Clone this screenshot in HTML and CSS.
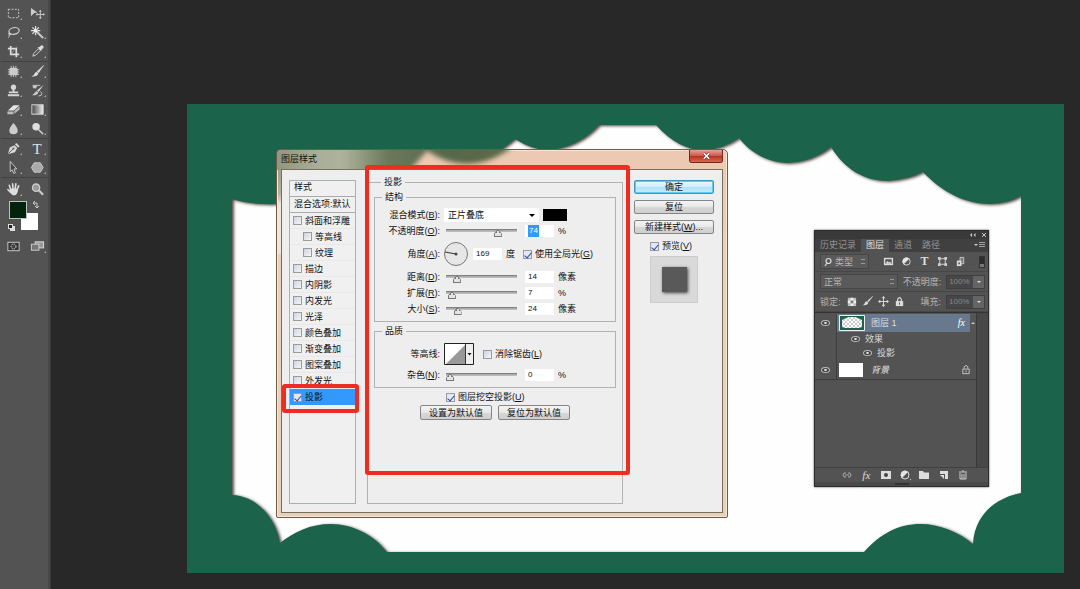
FILE: index.html
```
<!DOCTYPE html>
<html lang="zh-CN">
<head>
<meta charset="utf-8">
<meta name="viewport" content="width=device-width, initial-scale=1">
<title>图层样式</title>
<link rel="stylesheet" href="styles.css">
</head>
<body>
<div class="app">
  <nav class="tools" aria-label="工具">
    <div class="tool-group">
      <button class="tool more" aria-label="选框"><svg viewBox="0 0 16 16"><rect x="2.500" y="3.500" width="11" height="9" fill="none" stroke="#d2d2d2" stroke-dasharray="2 1.500"/></svg></button>
      <button class="tool" aria-label="移动"><svg viewBox="0 0 16 16"><path d="M1 2l7 5-3.500.500L1 11z" fill="#ccc"/><path d="M11 5v8M7 9h8" stroke="#ccc"/><path d="M11 4l-1.500 2h3zM11 14l-1.500-2h3zM16 9l-2-1.500v3zM6 9l2-1.500v3z" fill="#ccc"/></svg></button>
      <button class="tool more" aria-label="套索"><svg viewBox="0 0 16 16"><ellipse cx="8.500" cy="6.500" rx="5.500" ry="3.500" fill="none" stroke="#d2d2d2" stroke-width="1.300" transform="rotate(-12 8 6)"/><path d="M4 8c-2 1-1 3 .5 2.500S5 8.500 4 9c-1 2 0 3-1.500 4.500" fill="none" stroke="#d2d2d2"/></svg></button>
      <button class="tool more" aria-label="魔棒"><svg viewBox="0 0 16 16"><path d="M7 7l7 7" stroke="#ccc" stroke-width="2.200"/><path d="M6 1v4M6 8v3M1 6h4M8 6h3M2.500 2.500l2.500 2.500M9.500 2.500L7.500 4.500M2.500 9.500L4.500 7.500" stroke="#ddd" stroke-width="1.300"/><circle cx="6" cy="6" r="2" fill="#eee"/></svg></button>
      <button class="tool more" aria-label="裁剪"><svg viewBox="0 0 16 16"><path d="M5 2v9h9M2 5h9v9" fill="none" stroke="#ddd" stroke-width="1.800"/><path d="M5 11l7-8" stroke="#bbb" stroke-width=".7"/></svg></button>
      <button class="tool more" aria-label="吸管"><svg viewBox="0 0 16 16"><path d="M3 13l1-3 5-5 2 2-5 5z" fill="none" stroke="#d2d2d2"/><path d="M8 3.500l1.500 0L12 1.500q2.500-.5 2.500 2.500l-2.500 2.500v1.500z" fill="#ddd"/></svg></button>
    </div>
    <div class="tool-group">
      <button class="tool more" aria-label="修复"><svg viewBox="0 0 16 16"><rect x="3.500" y="4" width="9" height="8" rx="2" fill="#ccc"/><path d="M5.500 2v12M8 2v12M10.500 2v12M2 6h12M2 8.500h12M2 11h12" stroke="#ccc" stroke-width=".9"/></svg></button>
      <button class="tool more" aria-label="画笔"><svg viewBox="0 0 16 16"><path d="M14.500 1.500L7.500 8l1.500 1.500z" fill="#ddd" stroke="#ddd" stroke-width=".6"/><path d="M7 8.500l2 1.500q-1.500 4-7.500 3 3-1 3.500-3 .5-1.500 2-1.500z" fill="#ddd"/></svg></button>
      <button class="tool more" aria-label="图章"><svg viewBox="0 0 16 16"><circle cx="8" cy="4.500" r="2.800" fill="#d6d6d6"/><path d="M7 6h2v3h4v2H3V9h4zM2 12h12v2H2z" fill="#d6d6d6"/></svg></button>
      <button class="tool more" aria-label="历史画笔"><svg viewBox="0 0 16 16"><path d="M14.500 2L7.500 8l1.500 1.500z" fill="#ddd"/><path d="M7 8.500l2 1.500q-1.500 3.500-7 3 2.500-1 3-2.500zM2 3h6l-2 3" fill="#ccc"/><path d="M3 2.500h8M3 5h3M11 9q3 2 1 4l-3 1" fill="none" stroke="#ccc"/></svg></button>
      <button class="tool more" aria-label="橡皮擦"><svg viewBox="0 0 16 16"><path d="M2 9l6-5.500h6.500L8.500 9z" fill="#e5e5e5"/><path d="M1.500 10h6.500v3H1.500zM9 9.500l5.500-5v3.500L9 12.500z" fill="#bbb"/></svg></button>
      <button class="tool more" aria-label="渐变"><svg viewBox="0 0 16 16"><defs><linearGradient id="tone"><stop stop-color="#444"/><stop offset="1" stop-color="#eee"/></linearGradient></defs><rect x="2" y="3" width="12" height="10" fill="url(#tone)" stroke="#ddd"/></svg></button>
      <button class="tool more" aria-label="模糊"><svg viewBox="0 0 16 16"><path d="M8 2q4.500 5 4.500 8a4.500 4 0 0 1-9 0Q3.500 7 8 2z" fill="#ccc"/></svg></button>
      <button class="tool more" aria-label="减淡"><svg viewBox="0 0 16 16"><circle cx="6.500" cy="6" r="4" fill="#ddd"/><path d="M9 9l5 5" stroke="#ccc" stroke-width="1.600"/></svg></button>
    </div>
    <div class="tool-group">
      <button class="tool more" aria-label="钢笔"><svg viewBox="0 0 16 16"><path d="M2 14L4 7l5-2.500L12 7.500 9.500 12z" fill="#d8d8d8"/><path d="M9.500 3.500L11 2l3.500 3.500L13 7z" fill="#d8d8d8"/><path d="M2.500 13.500L8 8" stroke="#555"/><circle cx="8" cy="8" r="1" fill="#555"/></svg></button>
      <button class="tool more type" aria-label="文字">T</button>
      <button class="tool more" aria-label="选择路径"><svg viewBox="0 0 16 16"><path d="M4.500 1.500l7 8H8.500l1.500 4-1.800.8L6.500 10.500l-2 2z" fill="#454545" stroke="#ccc"/></svg></button>
      <button class="tool more" aria-label="形状"><svg viewBox="0 0 16 16"><path d="M4.500 3h6.500L14 8l-3 5H4.500L1.500 8z" fill="#aaa" stroke="#ccc"/></svg></button>
    </div>
    <div class="tool-group roomy">
      <button class="tool more" aria-label="抓手"><svg viewBox="0 0 16 16"><path d="M5 8L3.500 3.500M7.500 7L7 2M9.800 7L10.500 2M12 8l1.500-4M5 11L2 8" stroke="#ddd" stroke-width="1.700" stroke-linecap="round"/><path d="M4 7h8.800q.2 5-2.800 7H7Q4 12 4 7z" fill="#ddd"/></svg></button>
      <button class="tool" aria-label="缩放"><svg viewBox="0 0 16 16"><circle cx="6.500" cy="6" r="3.800" fill="#999" stroke="#ccc" stroke-width="1.500"/><path d="M9.500 9l4.500 4.500" stroke="#ccc" stroke-width="2.300"/></svg></button>
    </div>
    <div class="swatches">
      <svg viewBox="0 0 48 38"><path d="M20 14h17v17H20z" fill="#fff"/><rect x="8.500" y="2.500" width="17" height="17" fill="#04230f" stroke="#b9c4bb"/><path d="M32 4h4v4M34 2l-2 2 2 2M34 7l2 2 2-2" fill="none" stroke="#ccc"/><rect x="9.500" y="27.500" width="4" height="4" fill="#ddd" stroke="#ddd"/><rect x="7.500" y="25.500" width="4" height="4" fill="#222" stroke="#ddd"/></svg>
    </div>
    <div class="tool-group">
      <button class="tool" aria-label="快速蒙版"><svg viewBox="0 0 16 16"><rect x="2" y="3.500" width="12" height="9" fill="#333" stroke="#ccc"/><circle cx="8" cy="8" r="2.700" fill="#444" stroke="#ddd" stroke-dasharray="1.500 1"/></svg></button>
      <button class="tool more" aria-label="屏幕模式"><svg viewBox="0 0 16 16"><rect x="5.500" y="3" width="9" height="6.500" fill="#999" stroke="#ddd"/><rect x="1.500" y="5.500" width="8" height="6.500" fill="#777" stroke="#ccc"/></svg></button>
    </div>
  </nav>

  <main class="workspace">
    <svg class="artboard" viewBox="187 104 877 469" aria-label="画布">
      <defs><filter id="edge" x="0" y="0" width="1" height="1"><feDropShadow dx="1.800" dy="1" stdDeviation="1.600" flood-color="#301a1c" flood-opacity=".85"/></filter></defs>
      <path d="M187 104h877v469H187z" fill="#fefefe"/>
      <path filter="url(#edge)" fill="#1b634b" fill-rule="evenodd" d="M187 104h877v469H187z M599 125H656C672 143 688 150 703 150Q722 150 739 138C752 155 771 163 788 163Q812 162 831 147C845 170 865 181 888 181Q907 180 923 172C942 192 965 204 990 204Q1007 204 1021 196V493C990 499 974 520 973 544C959 532 939 524 921 524C898 524 880 534 864 552H387C374 535 353 524 331 524C310 524 294 532 280 543C276 518 257 496 232 495V199Q249 205 278 204Q324 198 345 172Q393 182 423 148Q468 180 515 139Q532 150 548 150Q578 148 599 125z"/>
    </svg>

    <form class="dialog" aria-label="图层样式">
      <svg class="glass" viewBox="0 0 450 20" preserveAspectRatio="none" aria-hidden="true">
        <defs><filter id="soft"><feGaussianBlur stdDeviation="2.500"/></filter>
        <linearGradient id="tint"><stop stop-color="#8c9278"/><stop offset=".2" stop-color="#a9af98"/><stop offset=".3" stop-color="#adb39b"/><stop offset=".48" stop-color="#6d785a"/><stop offset=".72" stop-color="#56674a"/><stop offset="1" stop-color="#5f6847"/></linearGradient></defs>
        <path filter="url(#soft)" fill="url(#tint)" d="M-9-9H240L230 1Q190 27 150 1L140 12 124 30H-9z"/>
      </svg>
      <header class="dialog-title"><h1>图层样式</h1><button type="button" class="close" aria-label="关闭"><svg viewBox="0 0 10 8"><path d="M2 1l6 6M8 1L2 7" stroke="#723" stroke-width="3"/><path d="M2 1l6 6M8 1L2 7" stroke="#fff" stroke-width="1.800"/></svg></button></header>
      <div class="client">
        <div class="styles">
          <div class="styles-head">样式</div>
          <div class="styles-head">混合选项:默认</div>
          <label class="style"><input type="checkbox">斜面和浮雕</label>
          <label class="style sub"><input type="checkbox">等高线</label>
          <label class="style sub"><input type="checkbox">纹理</label>
          <label class="style"><input type="checkbox">描边</label>
          <label class="style"><input type="checkbox">内阴影</label>
          <label class="style"><input type="checkbox">内发光</label>
          <label class="style"><input type="checkbox">光泽</label>
          <label class="style"><input type="checkbox">颜色叠加</label>
          <label class="style"><input type="checkbox">渐变叠加</label>
          <label class="style"><input type="checkbox">图案叠加</label>
          <label class="style"><input type="checkbox">外发光</label>
          <label class="style chosen"><input type="checkbox" checked>投影<span class="mark mark-style"></span></label>
        </div>

        <fieldset class="options">
          <legend>投影</legend>
          <fieldset class="group">
            <legend>结构</legend>
            <div class="row"><label class="name" for="mode">混合模式(<u>B</u>):</label><span class="select"><select id="mode"><option>正片叠底</option></select></span><button type="button" class="color" aria-label="阴影颜色"></button></div>
            <div class="row"><label class="name" for="opacity">不透明度(<u>O</u>):</label><input class="slider" type="range" value="76" aria-label="不透明度"><span class="field selected"><input id="opacity" value="74"></span><span>%</span></div>
            <div class="row tall"><label class="name" for="angle">角度(<u>A</u>):</label><svg class="dial" viewBox="0 0 24 24"><circle cx="12" cy="12" r="11.500" fill="#e6e6e6" stroke="#777"/><path d="M1 10l11 2" stroke="#333"/><circle cx="12" cy="12" r="1.500" fill="#444"/></svg><input class="number" id="angle" value="169"><span>度</span><label class="check"><input type="checkbox" checked>使用全局光(<u>G</u>)</label></div>
            <div class="row"><label class="name" for="distance">距离(<u>D</u>):</label><input class="slider" type="range" value="11" aria-label="距离"><input class="number" id="distance" value="14"><span>像素</span></div>
            <div class="row"><label class="name" for="spread">扩展(<u>R</u>):</label><input class="slider" type="range" value="3" aria-label="扩展"><input class="number" id="spread" value="7"><span>%</span></div>
            <div class="row"><label class="name" for="size">大小(<u>S</u>):</label><input class="slider" type="range" max="200" value="24" aria-label="大小"><input class="number" id="size" value="24"><span>像素</span></div>
          </fieldset>
          <fieldset class="group">
            <legend>品质</legend>
            <div class="row contour"><span class="name">等高线:</span><button type="button" class="curve" aria-label="等高线"><svg viewBox="0 0 30 22"><path d="M.5.500h29v21H.5z" fill="#fff" stroke="#222"/><path d="M2 21L21 2v19z" fill="#999"/><path d="M22 1h7v20h-7z" fill="#eee"/><path d="M21.500 1v20" stroke="#333"/><path d="M23.500 10h4l-2 2.500z" fill="#111"/></svg></button><label class="check"><input type="checkbox">消除锯齿(<u>L</u>)</label></div>
            <div class="row"><label class="name" for="noise">杂色(<u>N</u>):</label><input class="slider" type="range" value="0" aria-label="杂色"><input class="number" id="noise" value="0"><span>%</span></div>
          </fieldset>
          <label class="check knock"><input type="checkbox" checked>图层挖空投影(<u>U</u>)</label>
          <div class="defaults"><button type="button" class="button">设置为默认值</button><button type="button" class="button">复位为默认值</button></div>
          <span class="mark mark-options"></span>
        </fieldset>

        <div class="actions">
          <button type="button" class="button primary">确定</button>
          <button type="button" class="button">复位</button>
          <button type="button" class="button">新建样式(<u>W</u>)...</button>
          <label class="check"><input type="checkbox" checked>预览(<u>V</u>)</label>
          <div class="preview"><i></i></div>
        </div>
      </div>
    </form>

    <section class="panel" aria-label="图层">
      <header class="panel-top"><svg viewBox="0 0 20 8"><path d="M4 2L2 4l2 2zM7.500 2l-2 2 2 2z" fill="#ccc"/><path d="M14 2l4 4M18 2l-4 4" stroke="#ccc"/></svg></header>
      <div class="tabs"><button>历史记录</button><button class="active">图层</button><button>通道</button><button>路径</button><svg class="menu" viewBox="0 0 12 8"><path d="M0 3h4L2 5z" fill="#ccc"/><path d="M5 1.500h6M5 3.500h6M5 5.500h6" stroke="#bbb" stroke-width=".8"/></svg></div>
      <div class="bar filter">
        <span class="drop kind"><svg viewBox="0 0 8 10"><circle cx="4.500" cy="4" r="2.500" fill="none" stroke="#ddd" stroke-width="1.200"/><path d="M3 6L1 9" stroke="#ddd" stroke-width="1.200"/></svg><select aria-label="过滤"><option>类型</option></select></span>
        <svg class="ico" viewBox="0 0 12 12"><path d="M1 2h10v8H1z" fill="#ddd"/><path d="M2.500 3.500h7v5h-7z" fill="#555"/><path d="M2.500 8.500l2.500-3 1.500 1.500 1-1 2 2.500z" fill="#ddd"/></svg>
        <svg class="ico" viewBox="0 0 12 12"><circle cx="6" cy="6" r="4" fill="#555" stroke="#ddd"/><path d="M3 9A4 4 0 0 1 9 3z" fill="#e5e5e5"/></svg>
        <span class="ico letter">T</span>
        <svg class="ico" viewBox="0 0 12 12"><path d="M3 2v8M9 2v8M2 3h8M2 9h8" stroke="#ddd"/><path d="M1 1h3v3H1zM8 1h3v3H8zM1 8h3v3H1zM8 8h3v3H8z" fill="#ccc"/></svg>
        <svg class="ico" viewBox="0 0 12 12"><path d="M5.500 1.500h4v7h-4z" fill="#777" stroke="#ccc"/><path d="M2 5h5v6H2z" fill="#ddd"/><path d="M3.500 7h2v2h-2z" fill="#666"/></svg>
        <i class="toggle"></i>
      </div>
      <div class="bar"><span class="drop blend"><select aria-label="混合模式"><option>正常</option></select></span><label for="p-opacity">不透明度:</label><span class="percent"><input id="p-opacity" value="100%"><button aria-label="展开"></button></span></div>
      <div class="bar"><span>锁定:</span>
        <svg class="ico" viewBox="0 0 12 12"><path d="M2 2h9v9H2z" fill="#bbb"/><path d="M5 2h3v3h3v3H8v3H5V8H2V5h3z" fill="#eee"/><path d="M5 5h3v3H5z" fill="#777"/></svg>
        <svg class="ico" viewBox="0 0 12 12"><path d="M11.500 0.500L6 5.500l1 1z" fill="#ddd" stroke="#ddd" stroke-width=".6"/><path d="M5.500 6l1.500 1.500Q5.500 11 .5 10q2-.5 2.500-2.500T5.500 6z" fill="#ddd"/></svg>
        <svg class="ico" viewBox="0 0 12 12"><path d="M6 2v8M2 6h8" stroke="#ddd"/><path d="M6 0L4 2.500h4zM6 12l-2-2.500h4zM0 6l2.500-2v4zM12 6L9.500 4v4z" fill="#ddd"/></svg>
        <svg class="ico" viewBox="0 0 12 12"><path d="M2 5.500h8V11H2z" fill="#ddd"/><path d="M4 6V3.500q2-3.500 4 0V6" fill="none" stroke="#ddd" stroke-width="1.300"/><path d="M6 7v2.500" stroke="#555"/></svg>
        <label class="fill" for="p-fill">填充:</label><span class="percent"><input id="p-fill" value="100%"><button aria-label="展开"></button></span></div>
      <div class="stack">
        <div class="layers">
          <div class="layer current"><span class="eye"></span><div class="info"><svg class="thumb" viewBox="0 0 26 16"><defs><pattern id="grid" width="4" height="4" patternUnits="userSpaceOnUse"><path d="M0 0h4v4H0z" fill="#fff"/><path d="M0 0h2v2H0zM2 2h2v2H2z" fill="#ccc"/></pattern></defs><path d="M.5.500h25v15H.5z" fill="#1b634b" stroke="#eee"/><path d="M3 5l4-2 3-1h6l3 1 4 2v7l-3 1H6l-3-1z" fill="url(#grid)"/></svg><span>图层 1</span><em>fx</em></div><span class="fold"></span></div>
          <div class="effect"><span class="eye"></span><span>效果</span></div>
          <div class="effect deep"><span class="eye"></span><span>投影</span></div>
          <div class="layer"><span class="eye"></span><div class="info"><span class="thumb blank"></span><b>背景</b><svg class="lock" viewBox="0 0 10 12"><path d="M1.500 5.500h7v5h-7zM3 5V3q2-3 4 0v2M5 7v2" fill="none" stroke="#ccc"/></svg></div></div>
        </div>
        <div class="scroll"></div>
      </div>
      <footer class="panel-foot">
        <button aria-label="链接"><svg viewBox="0 0 12 12"><path d="M5 4H3q-2 2 0 4h2M7 4h2q2 2 0 4H7M4 6h4" fill="none" stroke="#aaa"/></svg></button>
        <button class="fx" aria-label="添加样式">fx</button>
        <button aria-label="蒙版"><svg viewBox="0 0 12 12"><path d="M1 2h10v8H1z" fill="#ddd"/><circle cx="6" cy="6" r="2" fill="#444"/></svg></button>
        <button aria-label="调整"><svg viewBox="0 0 12 12"><circle cx="6" cy="6" r="4" fill="#555" stroke="#ddd"/><path d="M3 9A4 4 0 0 1 9 3z" fill="#e5e5e5"/><path d="M11 10h1v1h-1z" fill="#ccc"/></svg></button>
        <button aria-label="新组"><svg viewBox="0 0 12 12"><path d="M1 2h4l1 1.500h5V10H1z" fill="#ddd"/></svg></button>
        <button aria-label="新图层"><svg viewBox="0 0 12 12"><path d="M2 2h8v8H7V5H2z" fill="#ddd"/><path d="M2 6h4v4z" fill="#ddd"/></svg></button>
        <button aria-label="删除"><svg viewBox="0 0 12 12"><path d="M2 3h8M5 2h2M3 4v6h6V4M5 5v5M7 5v5" fill="none" stroke="#ccc"/></svg></button>
      </footer>
      <div class="grip"></div>
    </section>
  </main>
</div>
</body>
</html>
```
FILE: styles.css
```
* { box-sizing: border-box; }
body { margin: 0; background: #282828; font: 9px/12px "Liberation Sans", "Noto Sans CJK SC", sans-serif; color: #111; }
button, input, select { font: inherit; color: inherit; margin: 0; padding: 0; border: 0; background: none; border-radius: 0; }
svg { display: block; }
.app { display: flex; min-height: 100vh; }

/* Tool palette */
.tools { width: 51px; flex: none; padding: 4px 0 0 1px; background: linear-gradient(90deg, #535353 48px, #484848 48px); border-right: 1px solid #3a3a3a; }
.tool-group { display: grid; grid-template-columns: 24px 24px; grid-auto-rows: 19px; }
.tool-group + .tool-group { border-top: 1px solid #424242; }
.roomy { padding-top: 2px; }
.tool { display: grid; place-items: center; position: relative; }
.tool svg { width: 15px; height: 15px; }
.tool.more::after { content: ""; position: absolute; right: 3px; bottom: 3px; border: 1px solid #aaa; border-top-color: transparent; border-left-color: transparent; }
.type { font: 15px/16px "Liberation Serif", serif; color: #e2e2e2; }
.swatches svg { width: 48px; height: 38px; }

/* Document */
.workspace { position: relative; flex: 1; min-width: 0; padding: 104px 16px 16px 136px; }
.artboard { width: 100%; height: auto; }

/* Layer style dialog */
.dialog { position: absolute; left: 225px; top: 149px; width: 452px; border: 1px solid #6f5a4b; border-radius: 5px 5px 2px 2px; padding: 0 4px 4px; overflow: hidden; background: linear-gradient(#8c9278, #b3b49e 44px, #eee6da 54px, #eee6da 104px, transparent 104px) left top / 5px 105px no-repeat, linear-gradient(#ecc9b1, #ead0bb 30%, #e4d3b8); box-shadow: inset 0 0 0 1px #f8e5d4; }
.glass { position: absolute; left: 0; top: 0; width: 100%; height: 20px; }
.dialog-title { position: relative; display: flex; justify-content: space-between; height: 19px; }
.dialog-title h1 { margin: 0; font-size: 9px; font-weight: normal; line-height: 18px; }
.close { display: grid; place-items: center; width: 34px; height: 13px; border: 1px solid #6b2a24; border-top: 0; border-radius: 0 0 3px 3px; background: linear-gradient(#e0a396, #c9584a 50%, #b8301f 51%, #d66a50); }
.close svg { width: 9px; height: 8px; }
.client { position: relative; display: flex; gap: 11px; padding: 6px 8px 8px 7px; border: 1px solid #7c6d60; background: #efeeee; }
.styles { width: 67px; min-height: 324px; margin-top: 4px; border: 1px solid #a9b1b1; background: #f0f0f0; }
.styles-head { height: 16px; padding-left: 4px; line-height: 13px; border-bottom: 1px solid #aaa; white-space: nowrap; overflow: hidden; }
.styles-head + .styles-head { line-height: 15px; }
.style { position: relative; display: flex; align-items: center; gap: 3px; height: 16px; padding-left: 3px; border-bottom: 1px solid #e8e8e8; white-space: nowrap; }
.sub { padding-left: 13px; }
.chosen { background: #3399fe; border: 0; }
input[type="checkbox"] { appearance: none; flex: none; width: 9px; height: 9px; border: 1px solid #989ca2; background: linear-gradient(135deg, #cfd3da, #f6f6f6); }
input[type="checkbox"]:checked { background: #e3e8f5; position: relative; }
input[type="checkbox"]:checked::after { content: ""; position: absolute; left: 2px; top: 0; width: 3px; height: 6px; border: solid #31479a; border-width: 0 1px 1px 0; transform: rotate(40deg); }
.mark { position: absolute; border: 4px solid #ef2b22; border-radius: 3px; pointer-events: none; z-index: 2; }
.mark-style { inset: -5px -4px -8px -8px; }
.mark-options { inset: -23px -8px 28px -3px; }
.options { position: relative; flex: 1; min-width: 0; margin: 0; padding: 3px 6px 0; border: 1px solid #b2b2b2; }
.options legend { margin-left: 7px; padding: 0 3px; height: 12px; line-height: 12px; }
.group { margin: 0 0 3px; padding: 4px 0; border: 1px solid #b2b2b2; min-width: 0; }
.group .row { display: flex; align-items: center; gap: 4px; height: 16px; white-space: nowrap; }
.row .name { width: 65px; text-align: right; }
.group .row.tall { height: 30px; }
.group .row.contour { height: 26px; }
.select { position: relative; width: 95px; height: 14px; background: #fff; }
.select select { appearance: none; width: 100%; height: 14px; padding-left: 4px; line-height: 14px; }
.select::after { content: ""; position: absolute; right: 4px; top: 6px; border: 3px solid transparent; border-top-color: #000; border-bottom: 0; pointer-events: none; }
.color { width: 24px; height: 12px; background: #000; }
.slider { appearance: none; align-self: end; width: 74px; height: 12px; padding: 0 1px 0 2px; }
.slider::-webkit-slider-runnable-track { height: 8px; background: linear-gradient(#828282 1px, #aaa 1px, #aaa 2px, #bdbdbd 2px, #bdbdbd 3px, transparent 3px); }
.slider::-webkit-slider-thumb { appearance: none; width: 8px; height: 8px; background: linear-gradient(#e4e4e4, #e4e4e4) center 4px / 6px 3px no-repeat, linear-gradient(#e4e4e4, #e4e4e4) center 2px / 2px 2px no-repeat, #777; clip-path: polygon(50% 0, 100% 60%, 100% 100%, 0 100%, 0 60%); }
.number, .field { width: 29px; height: 12px; padding-left: 3px; background: #fff; font-size: 8px; line-height: 12px; margin-left: 3px; }
.dial + .number { margin-left: 1px; }
.field input { display: block; width: 11px; height: 12px; color: #fff; background: #3399fe; padding-left: 1px; }
.dial { width: 24px; height: 24px; }
.check { display: flex; align-items: center; white-space: nowrap; }
.check input { margin-right: 3px; }
.tall .check { margin-left: 4px; }
.curve, .curve svg { width: 30px; height: 22px; }
.contour .check { margin-left: 5px; }
.knock { margin-left: 72px; }
.defaults { display: flex; gap: 6px; margin: 2px 0 0 46px; }
.button { height: 14px; border: 1px solid #858585; border-radius: 2px; background: linear-gradient(#f4f4f4, #e8e8e8 50%, #d7d7d7 51%, #cfcfcf); line-height: 12px; white-space: nowrap; }
.defaults .button { width: 72px; height: 15px; }
.actions { width: 80px; display: flex; flex-direction: column; gap: 6px; padding-top: 4px; }
.primary { border-color: #4594bd; background: linear-gradient(#e8f8ff, #cfeefc 50%, #b2e0f7 51%, #c6efff); box-shadow: inset 0 0 0 1px #59cdf3; }
.actions .check { margin-left: 16px; }
.preview { display: grid; place-items: center; align-self: center; width: 48px; height: 47px; margin-top: -2px; border: 1px solid #ccc; background: #d9d9d9; }
.preview i { width: 25px; height: 25px; background: #595959; box-shadow: 1px 1px 3px #444; }

/* Layers panel */
.panel { position: absolute; left: 763px; top: 230px; width: 175px; border: 1px solid #2c2c2c; background: #535353; color: #b5b5b5; box-shadow: 0 0 2px #555; }
.panel-top { display: flex; justify-content: flex-end; height: 8px; background: #393939; }
.panel-top svg { width: 20px; height: 8px; }
.tabs { display: flex; height: 13px; background: #404040; }
.tabs button { padding: 0 5px; line-height: 13px; color: #929292; }
.tabs .active { background: #535353; color: #e0e0e0; }
.menu { width: 12px; height: 8px; margin: 2px 2px 0 auto; }
.bar { display: flex; align-items: center; gap: 5px; height: 20px; padding: 0 3px 0 5px; border-bottom: 1px solid #474747; white-space: nowrap; }
.ico { width: 11px; height: 11px; flex: none; }
.filter .ico { margin-right: 3px; }
.filter { gap: 4px; }
.letter { font: bold 12px/11px "Liberation Serif", serif; text-align: center; color: #ddd; }
.drop { position: relative; display: flex; align-items: center; height: 15px; border: 1px solid #464646; background: #5a5a5a; }
.drop select { appearance: none; flex: 1; height: 13px; padding-left: 3px; }
.drop::after { content: ""; position: absolute; right: 3px; top: 4px; width: 4px; height: 5px; background: linear-gradient(#999 1px, transparent 1px, transparent 4px, #999 4px); }
.kind { width: 49px; margin-right: 10px; }
.kind svg { width: 8px; height: 10px; margin-left: 3px; }
.blend { width: 78px; }
.toggle { width: 6px; height: 12px; margin-left: auto; background: linear-gradient(#2e2e2e 7px, #777 7px); border: 1px solid #333; }
.percent { display: flex; width: 39px; height: 14px; margin-left: auto; border: 1px solid #3f3f3f; background: #474747; }
.percent input { width: 26px; padding-left: 2px; font-size: 8px; color: #888; }
.percent button { flex: 1; display: grid; place-items: center; background: #646464; }
.percent button::after { content: ""; border: 2px solid transparent; border-top-color: #ddd; border-bottom: 0; }
.fill { margin-left: auto; }
.fill + .percent { margin-left: 0; }
.stack { display: flex; min-height: 155px; border-top: 1px solid #333; }
.layers { flex: 1; padding-top: 1px; }
.scroll { width: 12px; background: #484848; border-left: 1px solid #393939; }
.layer { display: flex; align-items: center; height: 20px; border-bottom: 1px solid #3c3c3c; color: #ddd; }
.layer.current { height: 18px; border: 0; }
.layer .eye { margin: 0 6px; }
.eye { flex: none; width: 9px; height: 6px; border: 1px solid #bbb; border-radius: 50%; background: radial-gradient(#ddd 1px, #444 2px); }
.info { flex: 1; display: flex; align-items: center; gap: 6px; height: 100%; padding: 0 5px 0 2px; border-left: 1px solid #3e3e3e; }
.current .info { background: #68788f; }
.info em { margin-left: auto; font: italic 10px/12px "Liberation Serif", serif; color: #fff; }
.thumb { width: 26px; height: 16px; }
.blank { width: 24px; height: 14px; background: #fff; margin-right: 2px; }
.info b { font-weight: normal; font-style: italic; }
.lock { width: 10px; height: 11px; margin-left: auto; }
.current .fold { width: 6px; height: 100%; display: grid; place-items: center; background: #555; }
.fold::after { content: ""; border: 2px solid transparent; border-bottom-color: #ccc; border-top: 0; }
.effect { display: flex; align-items: center; gap: 5px; height: 14px; margin-left: 21px; padding-left: 14px; border-left: 1px solid #3e3e3e; color: #ddd; }
.deep { padding-left: 26px; }
.panel-foot { display: flex; justify-content: space-between; height: 15px; padding: 0 19px 0 26px; border-top: 1px solid #414141; align-items: center; }
.panel-foot button, .panel-foot svg { width: 12px; height: 12px; }
.panel-foot .fx { font: italic 11px/12px "Liberation Serif", serif; color: #ddd; }
.grip { height: 4px; background: linear-gradient(#333, #333) center / 14px 2px no-repeat #494949; }
```
